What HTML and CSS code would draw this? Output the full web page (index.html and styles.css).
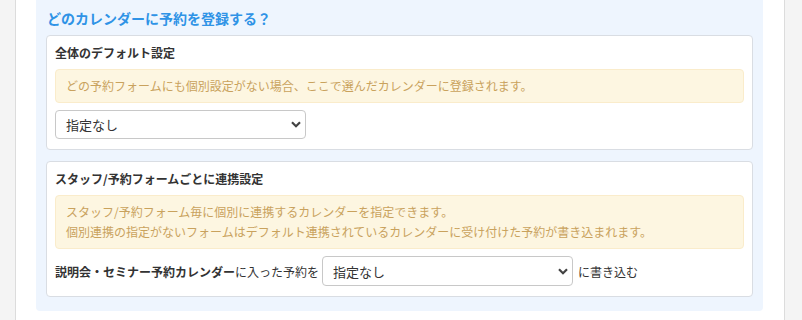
FILE: index.html
```html
<!DOCTYPE html>
<html lang="ja">
<head>
    <meta charset="UTF-8">
    <title>カレンダー連携</title>
    <link rel="stylesheet" href="styles.css">
</head>
<body>
    <div class="page">
        <section class="calendar-panel">
            <h2 class="panel-title">どのカレンダーに予約を登録する？</h2>

            <div class="card">
                <h3 class="card-title">全体のデフォルト設定</h3>
                <div class="alert">どの予約フォームにも個別設定がない場合、ここで選んだカレンダーに登録されます。</div>
                <select class="select">
                    <option>指定なし</option>
                </select>
            </div>

            <div class="card">
                <h3 class="card-title">スタッフ/予約フォームごとに連携設定</h3>
                <div class="alert">
                    スタッフ/予約フォーム毎に個別に連携するカレンダーを指定できます。<br>
                    個別連携の指定がないフォームはデフォルト連携されているカレンダーに受け付けた予約が書き込まれます。
                </div>
                <div class="link-row">
                    <span class="link-label"><b>説明会・セミナー予約カレンダー</b>に入った予約を</span>
                    <select class="select">
                        <option>指定なし</option>
                    </select>
                    <span class="link-label">に書き込む</span>
                </div>
            </div>
        </section>
    </div>
</body>
</html>
```

FILE: styles.css
```css
/* page frame */
body {
    margin: 0;
    padding: 0;
    background-color: #f4f4f4;
    color: #333;
    font-family: "Noto Sans CJK JP", "Noto Sans", sans-serif;
    font-size: 12px;
}
.page {
    margin-left: 15px;
    width: 727px;
    min-height: 320px;
    background-color: #fff;
    border-left: 1px solid #dcdcdc;
    border-right: 1px solid #dcdcdc;
    padding: 0 21px 0 20px;
}
.calendar-panel {
    background-color: #eef5fe;
    padding: 8px 10px 14px;
    border-radius: 0 0 4px 4px;
}
.panel-title {
    margin: 0 0 7px 1px;
    font-size: 14px;
    line-height: 20px;
    font-weight: bold;
    color: #2f93e6;
}
.card {
    background-color: #fff;
    border: 1px solid #d9dde3;
    border-radius: 4px;
    padding: 10px 8px;
}
.card + .card {
    margin-top: 11px;
}
.card-title {
    margin: 0;
    font-size: 12px;
    line-height: 14px;
    font-weight: bold;
    color: #333;
}
.alert {
    margin-top: 9px;
    padding: 6px 10px;
    line-height: 20px;
    background-color: #fdf6e1;
    border: 1px solid #faeccb;
    border-radius: 4px;
    color: #c9a25d;
}
.select {
    display: block;
    margin-top: 7px;
    width: 251px;
    height: 29px;
    padding: 0 24px 0 10px;
    border: 1px solid #c8c8c8;
    border-radius: 4px;
    background-color: #fff;
    color: #333;
    font-family: inherit;
    font-size: 13px;
    -webkit-appearance: none;
    appearance: none;
    background-image: url("data:image/svg+xml,%3Csvg xmlns='http://www.w3.org/2000/svg' width='10' height='7' viewBox='0 0 10 7'%3E%3Cpath d='M1 1.2 5 5.2 9 1.2' fill='none' stroke='%23444' stroke-width='2.2'/%3E%3C/svg%3E");
    background-repeat: no-repeat;
    background-position: right 4px center;
}
.link-row {
    display: flex;
    align-items: center;
    margin-top: 7px;
}
.link-row .select {
    margin: 0 5px 0 3px;
    height: 30px;
}
```
